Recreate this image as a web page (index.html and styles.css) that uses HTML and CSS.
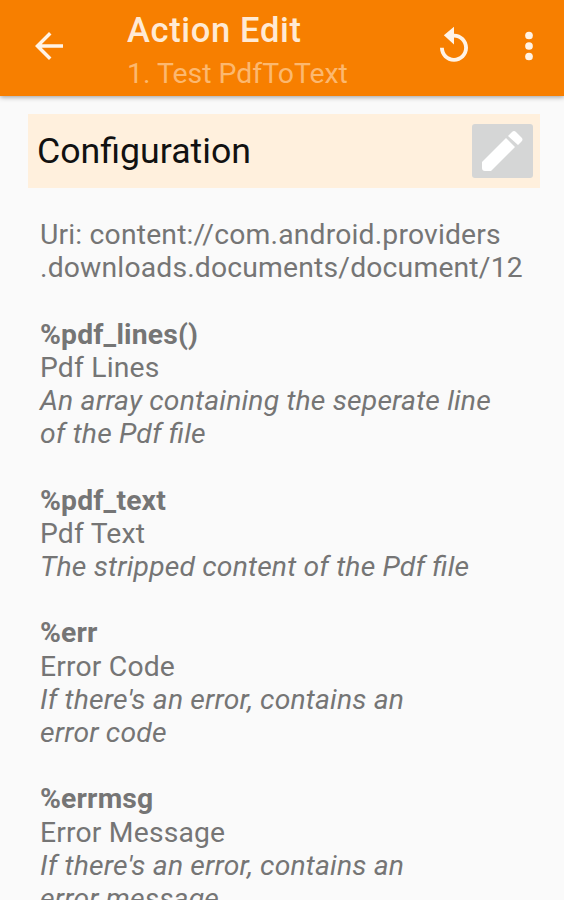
FILE: index.html
```
<!DOCTYPE html>
<html lang="en">
<head>
    <meta charset="UTF-8">
    <title>Action Edit</title>
    <link rel="stylesheet" href="styles.css">
</head>
<body>
<header class="bar">
    <svg class="back" viewBox="0 0 24 24"><path d="M20 11H7.83l5.59-5.59L12 4l-8 8 8 8 1.41-1.41L7.83 13H20v-2z"/></svg>
    <div class="titles">
        <h1>Action Edit</h1>
        <p>1. Test PdfToText</p>
    </div>
    <svg class="reset" viewBox="0 0 24 24"><path d="M12 5V1L6.2 5.9l5.8 5.3V7.2c3.2 0 5.8 2.6 5.8 5.8s-2.6 5.8-5.8 5.8-5.8-2.6-5.8-5.8H4c0 4.42 3.58 8 8 8s8-3.58 8-8-3.58-8-8-8z"/></svg>
    <svg class="more" viewBox="0 0 24 24"><circle cx="12" cy="6" r="2.2"/><circle cx="12" cy="12" r="2.2"/><circle cx="12" cy="18" r="2.2"/></svg>
</header>
<main>
    <div class="config">
        <h2>Configuration</h2>
        <button class="edit">
            <svg viewBox="0 0 61 54"><path d="M10 38L34 14l9 9-24 24h-6q-3 0-3-3zM36 12l4-4q2-2 4 0l5.5 5.5q2 2 0 4l-3.5 3.5z"/></svg>
        </button>
    </div>
    <div class="content">
        <p>Uri: content://com.android.providers<br>.downloads.documents/document/12</p>
        <p>
            <b>%pdf_lines()</b><br>
            Pdf Lines<br>
            <i>An array containing the seperate line<br>of the Pdf file</i>
        </p>
        <p>
            <b>%pdf_text</b><br>
            Pdf Text<br>
            <i>The stripped content of the Pdf file</i>
        </p>
        <p>
            <b>%err</b><br>
            Error Code<br>
            <i>If there's an error, contains an<br>error code</i>
        </p>
        <p>
            <b>%errmsg</b><br>
            Error Message<br>
            <i>If there's an error, contains an<br>error message</i>
        </p>
    </div>
</main>
</body>
</html>
```
FILE: styles.css
```
*{
    margin: 0;
    padding: 0;
    box-sizing: border-box;
}
body{
    height: 900px;
    overflow: hidden;
    background: #fafafa;
    font-family: Roboto, sans-serif;
}
.bar{
    display: flex;
    height: 96px;
    background: #f77f00;
    box-shadow: 0 1px 5px rgba(0,0,0,0.4);
}
.bar svg{
    fill: #fff3e6;
    flex: none;
}
.back{
    width: 42px;
    height: 42px;
    margin: 25px 0 0 28px;
}
.titles{
    flex: 1;
    margin-left: 57px;
    padding-top: 12px;
    white-space: nowrap;
}
.titles h1{
    font-size: 34.5px;
    line-height: 36px;
    font-weight: 500;
    letter-spacing: 0.65px;
    color: #ffead4;
}
.titles p{
    font-size: 28.4px;
    line-height: 32px;
    margin-top: 10px;
    color: #fcb86f;
}
.reset{
    width: 42px;
    height: 42px;
    margin-top: 25px;
}
.more{
    width: 42px;
    height: 42px;
    margin: 25px 14px 0 33px;
}
.config{
    display: flex;
    align-items: center;
    justify-content: space-between;
    height: 74px;
    margin: 18px 24px 0 28px;
    padding: 0 7px 0 9px;
    background: #fff0dd;
}
.config h2{
    font-size: 35.7px;
    font-weight: 400;
    color: #111;
}
.edit{
    width: 61px;
    height: 54px;
    border: 0;
    border-radius: 3px;
    background: #d5d6d6;
}
.edit svg{
    display: block;
    width: 61px;
    height: 54px;
    fill: #fff;
}
.content{
    margin: 30px 0 0 40px;
    font-size: 28.3px;
    line-height: 33.2px;
    letter-spacing: 0.18px;
    /* keep the fi ligature with letter-spacing on */
    font-feature-settings: "liga" 1;
    color: #757575;
    white-space: nowrap;
}
.content p{
    margin-bottom: 33.2px;
}
```
